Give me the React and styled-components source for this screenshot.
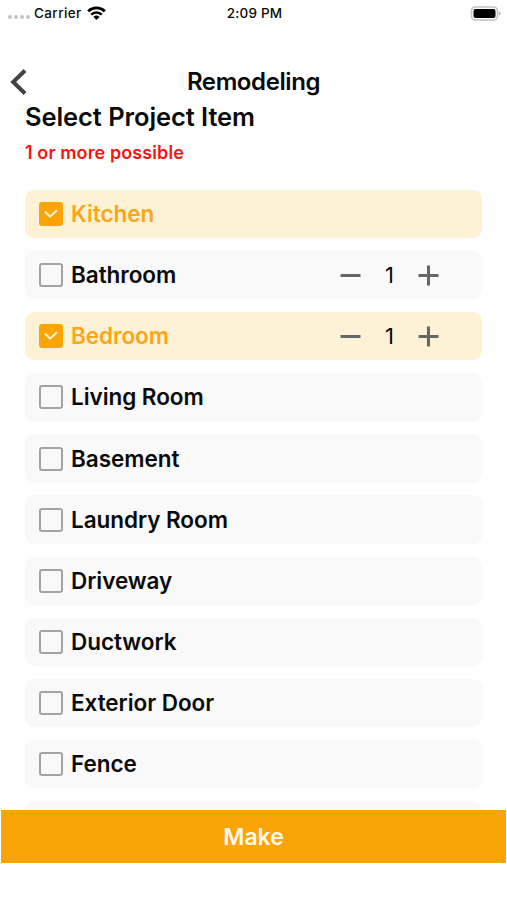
import React, { useState } from "react"
import styled, { createGlobalStyle, css } from "styled-components"

const GlobalStyle = createGlobalStyle`
  * {
    box-sizing: border-box;
  }

  body {
    margin: 0;
    background: #fff;
    color: #0a0a0a;
    font-family: Inter, "Liberation Sans", sans-serif;
  }

  button {
    background: none;
    border: 0;
    padding: 0;
    font: inherit;
    color: inherit;
    cursor: pointer;
  }
`

const Screen = styled.div`
  width: 507px;
  height: 900px;
  display: flex;
  flex-direction: column;
  overflow: hidden;
`

const StatusBar = styled.div`
  flex: none;
  height: 26px;
  padding: 0 6px 0 8px;
  display: grid;
  grid-template-columns: 1fr auto 1fr;
  align-items: center;
  font-size: 13.5px;
  font-weight: 500;
  letter-spacing: 0.2px;
`

const Carrier = styled.div`
  display: flex;
  align-items: center;
  letter-spacing: 0.4px;

  svg {
    margin-left: 5px;
  }
`

const Signal = styled.div`
  display: flex;
  gap: 2px;
  margin: 8px 4px 0 0;
`

const Dot = styled.span`
  width: 4px;
  height: 4px;
  border-radius: 50%;
  background: #c4c4c4;
`

const Battery = styled.svg`
  justify-self: end;
`

const NavBar = styled.header`
  flex: none;
  height: 36px;
  margin-top: 38px;
  padding: 0 10px;
  display: grid;
  grid-template-columns: 1fr auto 1fr;
  align-items: center;
`

const BackButton = styled.button`
  display: flex;
  justify-self: start;
`

const Title = styled.h1`
  margin: 0;
  font-size: 24px;
  line-height: 36px;
  font-weight: 600;
  letter-spacing: -0.4px;
`

const Content = styled.main`
  flex: 1;
  min-height: 0;
  overflow: hidden;
  padding: 0 25px;
`

const Heading = styled.h2`
  margin: 0;
  font-size: 25.5px;
  line-height: 34px;
  font-weight: 600;
  letter-spacing: -0.08px;
`

const Hint = styled.p`
  margin: 8px 0 26px;
  color: #f5140f;
  font-size: 18px;
  line-height: 22px;
  font-weight: 600;
  letter-spacing: 0.1px;
`

const ItemList = styled.div`
  display: flex;
  flex-direction: column;
  gap: 12.8px;
`

const Item = styled.div`
  flex: none;
  height: 48.3px;
  padding: 0 43px 0 14px;
  border-radius: 9px;
  background: #f9f9f9;
  display: flex;
  align-items: center;

  ${({ $selected }) =>
    $selected &&
    css`
      background: #fef2d6;
    `}
`

const CheckBox = styled.button`
  width: 24px;
  height: 24px;
  border: 2px solid #a3a3a3;
  border-radius: 3px;
  display: flex;
  align-items: center;
  justify-content: center;

  ${({ $checked }) =>
    $checked &&
    css`
      background: #fba405;
      border-color: #fba405;
    `}
`

const ItemLabel = styled.span`
  margin-left: 8px;
  padding-bottom: 1px;
  flex: 1;
  font-size: 22.5px;
  font-weight: 600;
  letter-spacing: -0.05px;
  color: ${({ $selected }) => ($selected ? "#fba619" : "inherit")};
`

const Stepper = styled.div`
  display: flex;
  align-items: center;

  button {
    display: flex;
  }
`

const Count = styled.span`
  width: 57px;
  text-align: center;
  font-size: 22px;
`

const MakeButton = styled.button`
  && {
    flex: none;
    height: 53px;
    margin: 0 1px 37px;
    background: #fba405;
    color: #fffaf0;
    font-size: 23px;
    font-weight: 600;
  }
`

const ITEMS = [
  { name: "Kitchen" },
  { name: "Bathroom", countable: true },
  { name: "Bedroom", countable: true },
  { name: "Living Room" },
  { name: "Basement" },
  { name: "Laundry Room" },
  { name: "Driveway" },
  { name: "Ductwork" },
  { name: "Exterior Door" },
  { name: "Fence" },
  { name: "" },
]

function WifiIcon() {
  return (
    <svg width="19" height="14" viewBox="0 0 19 14" fill="none" stroke="#000">
      <path d="M1.2 5.2a12 12 0 0 1 16.6 0" strokeWidth="2.8" />
      <path d="M4.2 8.6a7.6 7.6 0 0 1 10.6 0" strokeWidth="2.5" />
      <path d="M9.5 13.9 6.4 10.9a4.4 4.4 0 0 1 6.2 0z" fill="#000" stroke="none" />
    </svg>
  )
}

function ProjectItem({ name, countable, selected, onToggle }) {
  const [count, setCount] = useState(1)
  return (
    <Item $selected={selected}>
      <CheckBox $checked={selected} onClick={onToggle}>
        {selected && (
          <svg width="14" height="10" viewBox="0 0 14 10" fill="none">
            <path d="M1 2.5 6 7.7 13 1.2" stroke="#fff4dc" strokeWidth="2" />
          </svg>
        )}
      </CheckBox>
      <ItemLabel $selected={selected}>{name}</ItemLabel>
      {countable && (
        <Stepper>
          <button onClick={() => setCount(Math.max(1, count - 1))}>
            <svg width="21" height="21" viewBox="0 0 21 21">
              <path d="M0.5 10.5h20" stroke="#66666a" strokeWidth="3" />
            </svg>
          </button>
          <Count>{count}</Count>
          <button onClick={() => setCount(count + 1)}>
            <svg width="21" height="21" viewBox="0 0 21 21">
              <path d="M0.5 10.5h20M10.5 0.5v20" stroke="#66666a" strokeWidth="3" />
            </svg>
          </button>
        </Stepper>
      )}
    </Item>
  )
}

function App() {
  const [selected, setSelected] = useState(["Kitchen", "Bedroom"])

  const toggle = name =>
    setSelected(
      selected.includes(name)
        ? selected.filter(item => item !== name)
        : [...selected, name]
    )

  return (
    <Screen>
      <GlobalStyle />
      <StatusBar>
        <Carrier>
          <Signal>
            <Dot />
            <Dot />
            <Dot />
            <Dot />
          </Signal>
          Carrier
          <WifiIcon />
        </Carrier>
        <span>2:09 PM</span>
        <Battery width="31" height="15" viewBox="0 0 31 15">
          <rect x="1.5" y="1" width="26" height="13" rx="4" fill="#fff" stroke="#c2c2c2" strokeWidth="1.6" />
          <rect x="3.5" y="3" width="22" height="9" rx="2" fill="#000" />
          <path d="M29.1 5.5c1.6.8 1.6 3.2 0 4z" fill="#999" />
        </Battery>
      </StatusBar>
      <NavBar>
        <BackButton>
          <svg width="18" height="26" viewBox="0 0 18 26" fill="none">
            <path d="M15 1.5 3.2 13 15 24.5" stroke="#434347" strokeWidth="4" />
          </svg>
        </BackButton>
        <Title>Remodeling</Title>
      </NavBar>
      <Content>
        <Heading>Select Project Item</Heading>
        <Hint>1 or more possible</Hint>
        <ItemList>
          {ITEMS.map(item => (
            <ProjectItem
              key={item.name}
              {...item}
              selected={selected.includes(item.name)}
              onToggle={() => toggle(item.name)}
            />
          ))}
        </ItemList>
      </Content>
      <MakeButton>Make</MakeButton>
    </Screen>
  )
}

export default App
